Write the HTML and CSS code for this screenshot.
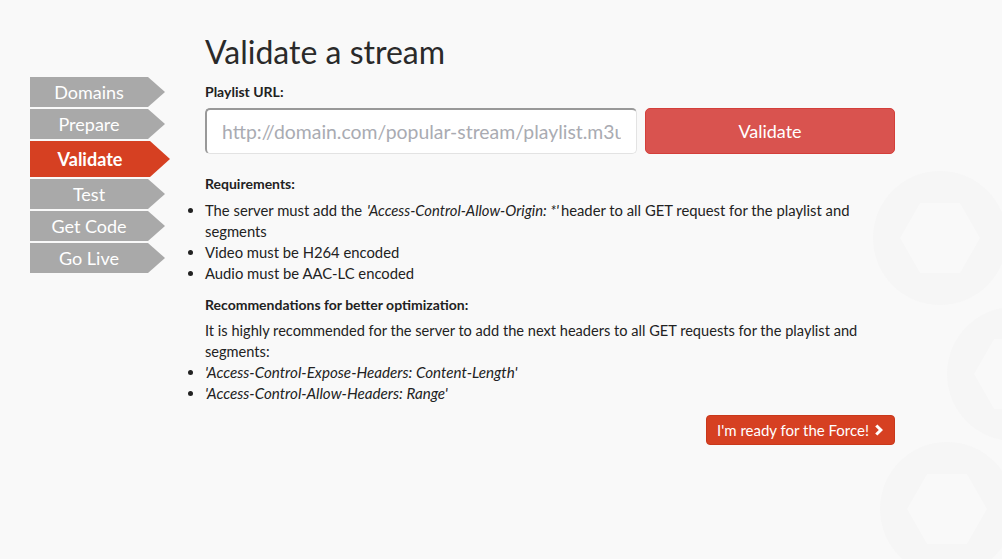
FILE: index.html
```html
<!DOCTYPE html>
<html>
<head>
<meta charset="utf-8">
<title>Validate a stream</title>
<link rel="stylesheet" href="styles.css">
</head>
<body>
<svg class="bg-deco" width="1002" height="559" viewBox="0 0 1002 559" aria-hidden="true">
  <path fill-rule="evenodd" fill="#f6f6f6" d="M873,238 a67,67 0 1,0 134,0 a67,67 0 1,0 -134,0 Z M900,238 L920,203 L960,203 L980,238 L960,273 L920,273 Z"/>
  <path fill-rule="evenodd" fill="#f6f6f6" d="M947,374 a67,67 0 1,0 134,0 a67,67 0 1,0 -134,0 Z M974,374 L994,339 L1034,339 L1054,374 L1034,409 L994,409 Z"/>
  <path fill-rule="evenodd" fill="#f6f6f6" d="M880,509 a67,67 0 1,0 134,0 a67,67 0 1,0 -134,0 Z M907,509 L927,474 L967,474 L987,509 L967,544 L927,544 Z"/>
</svg>
<div class="page">
  <nav class="steps">
    <div class="step">Domains</div>
    <div class="step">Prepare</div>
    <div class="step active">Validate</div>
    <div class="step">Test</div>
    <div class="step">Get Code</div>
    <div class="step">Go Live</div>
  </nav>
  <main class="main">
    <h1 class="title">Validate a stream</h1>
    <label class="label">Playlist URL:</label>
    <div class="url-row">
      <input class="url-input" type="text" placeholder="http://domain.com/popular-stream/playlist.m3u8">
      <button class="validate-btn">Validate</button>
    </div>
    <h4 class="subhead">Requirements:</h4>
    <ul class="list">
      <li>The server must add the <em class="inline-em">'Access-Control-Allow-Origin: *'</em>header to all GET request for the playlist and segments</li>
      <li>Video must be H264 encoded</li>
      <li>Audio must be AAC-LC encoded</li>
    </ul>
    <h4 class="subhead second">Recommendations for better optimization:</h4>
    <p class="para">It is highly recommended for the server to add the next headers to all GET requests for the playlist and segments:</p>
    <ul class="list tight">
      <li><em>'Access-Control-Expose-Headers: Content-Length'</em></li>
      <li><em>'Access-Control-Allow-Headers: Range'</em></li>
    </ul>
    <div class="actions">
      <button class="force-btn">I'm ready for the Force! <svg class="chev" width="10" height="12" viewBox="0 0 10 12"><path d="M1.2 2.4 L3.4 0.4 L9 6 L3.4 11.6 L1.2 9.6 L4.8 6 Z" fill="#fff"/></svg></button>
    </div>
  </main>
</div>
</body>
</html>
```
FILE: styles.css
```css
html, body {
  margin: 0;
  padding: 0;
}
body {
  background: #f9f9f9;
  font-family: "Lato", "Open Sans", sans-serif;
  color: #222;
  width: 1002px;
  height: 559px;
  overflow: hidden;
  position: relative;
}
.bg-deco {
  position: absolute;
  left: 0;
  top: 0;
  z-index: 0;
  opacity: 0.7;
}
.page {
  position: relative;
  z-index: 1;
  display: flex;
  align-items: flex-start;
}
.steps {
  margin-left: 30px;
  margin-top: 77px;
  width: 135px;
  display: flex;
  flex-direction: column;
  gap: 2px;
}
.step {
  height: 30px;
  line-height: 30px;
  background: #a9a9a9;
  color: #fff;
  font-size: 18px;
  text-align: center;
  padding-right: 17px;
  clip-path: polygon(0 0, calc(100% - 17px) 0, 100% 50%, calc(100% - 17px) 100%, 0 100%);
}
.step.active {
  height: 36px;
  line-height: 36px;
  background: #d64022;
  font-weight: bold;
  width: 140px;
  padding-right: 20px;
  box-sizing: border-box;
  clip-path: polygon(0 0, calc(100% - 20px) 0, 100% 50%, calc(100% - 20px) 100%, 0 100%);
}
.step:not(.active) {
  width: 135px;
  box-sizing: border-box;
}
.main {
  margin-left: 40px;
  width: 690px;
}
.title {
  margin: 32px 0 0 0;
  font-size: 32px;
  font-weight: normal;
  line-height: 40px;
  color: #2a2a2a;
}
.label {
  display: block;
  margin-top: 10px;
  font-size: 14px;
  font-weight: bold;
  line-height: 20px;
}
.url-row {
  display: flex;
  gap: 8px;
  margin-top: 6px;
}
.url-input {
  width: 432px;
  height: 46px;
  box-sizing: border-box;
  border-style: solid;
  border-width: 2px 1px 1px 2px;
  border-color: #999 #e3e3e3 #e3e3e3 #999;
  border-radius: 5px;
  background: #fff;
  padding: 0 15px;
  font-family: inherit;
  font-size: 19.4px;
  color: #333;
  outline: none;
}
.url-input::placeholder {
  color: #a9abb2;
}
.validate-btn {
  width: 250px;
  height: 46px;
  background: #d9534f;
  border: 1px solid #d43f3a;
  border-radius: 5px;
  color: #fff;
  font-family: inherit;
  font-size: 18px;
}
.subhead {
  margin: 20px 0 0 0;
  font-size: 14px;
  font-weight: bold;
  line-height: 20px;
}
.subhead.second {
  margin-top: 11px;
}
.list {
  margin: 6px 0 0 0;
  padding-left: 0;
  list-style: disc;
  font-size: 14.8px;
  line-height: 21px;
}
.inline-em {
  display: inline-block;
  padding: 0 2px 0 1px;
}
.list.tight {
  margin-top: 0;
  font-size: 15.2px;
}
.para {
  margin: 5px 0 0 0;
  font-size: 14.6px;
  line-height: 21px;
}
.actions {
  display: flex;
  justify-content: flex-end;
  margin-top: 11px;
}
.force-btn {
  height: 30px;
  background: #d64022;
  border: 1px solid #c9381b;
  border-radius: 4px;
  color: #fff;
  font-family: inherit;
  font-size: 15px;
  padding: 0 10px;
  display: flex;
  align-items: center;
  gap: 5px;
}
.chev {
  display: block;
}
```
